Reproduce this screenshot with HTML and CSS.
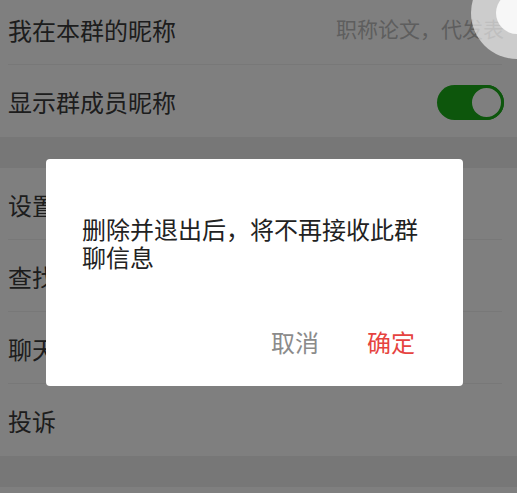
FILE: index.html
```html
<!DOCTYPE html>
<html lang="zh-CN">
<head>
<meta charset="utf-8">
<link rel="stylesheet" href="styles.css">
</head>
<body>
<div class="page">
  <div class="group first">
    <div class="row"><span class="label">我在本群的昵称</span><span class="value">职称论文，代发表</span></div>
    <div class="row last"><span class="label">显示群成员昵称</span><span class="switch"><span class="knob"></span></span></div>
  </div>
  <div class="group">
    <div class="row"><span class="label">设置当前聊天背景</span></div>
    <div class="row"><span class="label">查找聊天内容</span></div>
    <div class="row"><span class="label">聊天文件</span></div>
    <div class="row last"><span class="label">投诉</span></div>
  </div>
  <div class="group">
    <div class="row last"></div>
  </div>
</div>
<div class="mask">
  <div class="dialog">
    <p class="message">删除并退出后，将不再接收此群聊信息</p>
    <div class="actions">
      <span class="btn cancel">取消</span>
      <span class="btn ok">确定</span>
    </div>
  </div>
</div>
<div class="touch"><div class="touch-core"></div></div>
</body>
</html>
```
FILE: styles.css
```css
html, body {
  margin: 0;
  padding: 0;
  width: 517px;
  height: 493px;
  overflow: hidden;
  background: #eeeeee;
  font-family: "Noto Sans CJK SC", "Noto Sans", sans-serif;
}
.page {
  display: flex;
  flex-direction: column;
  gap: 31px;
  margin-top: -7px;
}
.group {
  background: #ffffff;
}
.row {
  height: 72px;
  margin: 0 15px 0 8px;
  border-bottom: 1px solid #f0f0f0;
  display: flex;
  align-items: center;
  justify-content: space-between;
  box-sizing: border-box;
}
.row.last {
  border-bottom: none;
}
.label {
  font-size: 24px;
  color: #3a3a3a;
  line-height: 1;
  margin-top: 2px;
}
.value {
  font-size: 21px;
  color: #bdbdbd;
  line-height: 1;
  margin-right: -2px;
}
.switch {
  width: 67px;
  height: 35px;
  border-radius: 18px;
  background: #1aad19;
  display: flex;
  justify-content: flex-end;
  box-sizing: border-box;
  margin-right: -2px;
  margin-top: 3px;
}
.knob {
  width: 35px;
  height: 35px;
  border-radius: 50%;
  background: #ffffff;
  border: 3px solid #1aad19;
  box-sizing: border-box;
}
.mask {
  position: fixed;
  inset: 0;
  background: rgba(0, 0, 0, 0.5);
  display: flex;
  flex-direction: column;
  align-items: flex-start;
}
.dialog {
  margin: 159px 0 0 46px;
  width: 417px;
  height: 227px;
  background: #ffffff;
  border-radius: 4px;
  box-sizing: border-box;
  padding: 56px 48px 0 36px;
  display: flex;
  flex-direction: column;
}
.message {
  margin: 0 -8px 0 0;
  font-size: 24px;
  line-height: 28px;
  color: #222222;
}
.actions {
  margin-top: 55px;
  display: flex;
  justify-content: flex-end;
  gap: 48px;
}
.btn {
  font-size: 24px;
  line-height: 32px;
}
.cancel {
  color: #8b8b8b;
}
.ok {
  color: #e64340;
}
.touch {
  position: fixed;
  left: 471px;
  top: -33px;
  width: 92px;
  height: 92px;
  border-radius: 50%;
  background: rgba(255, 255, 255, 0.6);
  display: flex;
  align-items: center;
  justify-content: center;
}
.touch-core {
  width: 42px;
  height: 42px;
  border-radius: 50%;
  background: #f7f7f7;
}
```
